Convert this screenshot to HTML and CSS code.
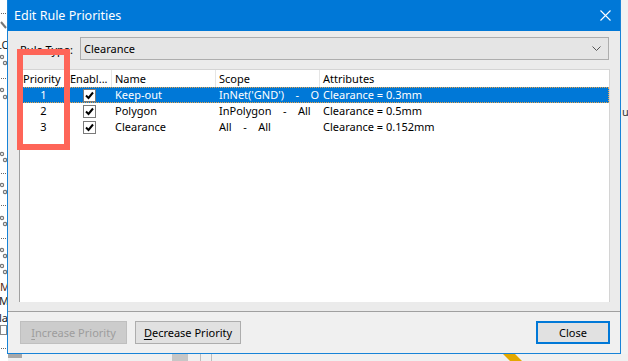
FILE: index.html
```
<!DOCTYPE html>
<html lang="en">
<head>
    <meta charset="UTF-8">
    <title>Edit Rule Priorities</title>
    <link rel="stylesheet" href="styles.css">
</head>
<body>
    <div class="screen">
        <div class="app-left">
            <svg width="7" height="354" viewBox="0 0 7 354">
                <g fill="#666">
                    <rect x="1" y="13" width="1" height="1"/><rect x="3" y="13" width="1" height="1"/><rect x="5" y="13" width="1" height="1"/>
                    <rect x="1" y="78" width="1" height="1"/><rect x="3" y="78" width="1" height="1"/><rect x="5" y="78" width="1" height="1"/>
                    <rect x="1" y="173" width="1" height="1"/><rect x="3" y="173" width="1" height="1"/><rect x="5" y="173" width="1" height="1"/>
                    <rect x="1" y="205" width="1" height="1"/><rect x="3" y="205" width="1" height="1"/><rect x="5" y="205" width="1" height="1"/>
                    <rect x="1" y="238" width="1" height="1"/><rect x="3" y="238" width="1" height="1"/><rect x="5" y="238" width="1" height="1"/>
                    <rect x="1" y="348" width="1" height="1"/><rect x="3" y="348" width="1" height="1"/><rect x="5" y="348" width="1" height="1"/>
                </g>
                <path d="M1 22 L6 28" stroke="#777" stroke-width="2"/>
                <g fill="none" stroke="#777" stroke-width="1.2">
                    <circle cx="2" cy="57" r="1.6"/><circle cx="5" cy="63" r="1.6"/>
                    <circle cx="2" cy="90" r="1.6"/><circle cx="5" cy="97" r="1.6"/>
                    <circle cx="2" cy="154" r="1.6"/><circle cx="5" cy="160" r="1.6"/>
                    <circle cx="2" cy="185" r="1.6"/><circle cx="5" cy="192" r="1.6"/>
                    <circle cx="2" cy="218" r="1.6"/><circle cx="5" cy="224" r="1.6"/>
                    <circle cx="2" cy="250" r="1.6"/><circle cx="5" cy="256" r="1.6"/>
                    <circle cx="2" cy="266" r="1.6"/><circle cx="5" cy="272" r="1.6"/>
                </g>
                <g font-family="Noto Sans, sans-serif" font-size="11" fill="#222">
                    <text x="-4" y="49">LO</text>
                    <text x="0" y="291" fill="#5a2a10">M</text>
                    <text x="-1" y="305">Ma</text>
                    <text x="-1" y="322">la</text>
                </g>
                <rect x="0.5" y="325.5" width="6" height="9" fill="none" stroke="#888"/>
            </svg>
        </div>

        <div class="dialog">
            <div class="titlebar">
                <span class="title">Edit Rule Priorities</span>
                <svg class="close-x" width="11" height="11" viewBox="0 0 11 11">
                    <path d="M0.5 0.5 L10.5 10.5 M10.5 0.5 L0.5 10.5" stroke="#fff" stroke-width="1.1"/>
                </svg>
            </div>

            <div class="content">
                <div class="rule-type">
                    <span class="rule-label">Rule Type:</span>
                    <div class="combo">
                        <span>Clearance</span>
                        <svg class="chevron" width="9" height="5" viewBox="0 0 9 5">
                            <path d="M0.5 0.5 L4.5 4.5 L8.5 0.5" fill="none" stroke="#555" stroke-width="1"/>
                        </svg>
                    </div>
                </div>

                <div class="list">
                    <div class="list-head">
                        <div class="cell">Priority</div>
                        <div class="cell">Enabl...</div>
                        <div class="cell">Name</div>
                        <div class="cell">Scope</div>
                        <div class="cell">Attributes</div>
                    </div>
                    <div class="list-row selected">
                        <div class="cell num">1</div>
                        <div class="cell check"><span class="checkbox"><svg width="11" height="11" viewBox="0 0 11 11"><path d="M2 5.5 L4.5 8 L9 2.5" fill="none" stroke="#000" stroke-width="2"/></svg></span></div>
                        <div class="cell">Keep-out</div>
                        <div class="cell"><span class="clip">InNet('GND')    -    O</span></div>
                        <div class="cell">Clearance = 0.3mm</div>
                    </div>
                    <div class="list-row">
                        <div class="cell num">2</div>
                        <div class="cell check"><span class="checkbox"><svg width="11" height="11" viewBox="0 0 11 11"><path d="M2 5.5 L4.5 8 L9 2.5" fill="none" stroke="#000" stroke-width="2"/></svg></span></div>
                        <div class="cell">Polygon</div>
                        <div class="cell">InPolygon    -    All</div>
                        <div class="cell">Clearance = 0.5mm</div>
                    </div>
                    <div class="list-row">
                        <div class="cell num">3</div>
                        <div class="cell check"><span class="checkbox"><svg width="11" height="11" viewBox="0 0 11 11"><path d="M2 5.5 L4.5 8 L9 2.5" fill="none" stroke="#000" stroke-width="2"/></svg></span></div>
                        <div class="cell">Clearance</div>
                        <div class="cell">All    -    All</div>
                        <div class="cell">Clearance = 0.152mm</div>
                    </div>
                </div>
            </div>

            <div class="footer">
                <button class="btn btn-increase" disabled><u>I</u>ncrease Priority</button>
                <button class="btn btn-decrease"><u>D</u>ecrease Priority</button>
                <button class="btn btn-close">Close</button>
            </div>
        </div>

        <div class="app-right">
            <span class="app-right-text">u</span>
        </div>
    </div>

    <div class="app-bottom">
        <svg width="628" height="7" viewBox="0 0 628 7">
            <rect x="0" y="0" width="628" height="7" fill="#f0f0f0"/>
            <rect x="0" y="0" width="8" height="7" fill="#fff"/>
            <rect x="8" y="0" width="14" height="4" fill="#a8a8a8"/>
            <rect x="172" y="0" width="16" height="7" fill="#c6c6c6"/>
            <rect x="200" y="0" width="1" height="7" fill="#bdbdbd"/>
            <rect x="211" y="0" width="1" height="7" fill="#bdbdbd"/>
            <path d="M503 0 L515 0 L522 7 L510 7 Z" fill="#e3a800"/>
        </svg>
    </div>

    <div class="highlight-box"></div>
</body>
</html>
```

FILE: styles.css
```
body {
    margin: 0;
    padding: 0;
    font-family: "Noto Sans", "Open Sans", sans-serif;
    font-size: 11px;
    color: #000;
    background: #fff;
    width: 628px;
    height: 361px;
    overflow: hidden;
    position: relative;
}
.screen {
    display: flex;
    height: 354px;
}
.app-left {
    width: 7px;
    background: #fff;
    overflow: hidden;
}
.app-left svg {
    display: block;
}
.app-right {
    width: 7px;
    background: #f2f2f2;
    overflow: hidden;
}
.app-right-text {
    display: block;
    margin-top: 104px;
    margin-left: 1px;
    color: #333;
}
.app-bottom {
    height: 7px;
}
.app-bottom svg {
    display: block;
}
.dialog {
    width: 614px;
    box-sizing: border-box;
    border: 1px solid #1883d7;
    border-top: none;
    display: flex;
    flex-direction: column;
    background: #f0f0f0;
}
.titlebar {
    height: 31px;
    background: #0078d7;
    display: flex;
    align-items: center;
    padding: 0 9px 0 6px;
    color: #fff;
}
.title {
    font-size: 12.5px;
    flex: 1;
    padding-bottom: 1px;
}
.close-x {
    display: block;
}
.content {
    height: 281px;
    box-sizing: border-box;
    padding: 6px 10px 9px 11px;
    background: #ebebeb;
    border-bottom: 1px solid #a0a0a0;
    display: flex;
    flex-direction: column;
    gap: 9px;
}
.rule-type {
    display: flex;
    align-items: center;
    height: 23px;
}
.rule-label {
    width: 60px;
    padding-left: 1px;
    padding-top: 1px;
}
.combo {
    flex: 1;
    height: 23px;
    box-sizing: border-box;
    border: 1px solid #adadad;
    background: #e5e5e5;
    display: flex;
    align-items: center;
    padding: 0 7px 0 3px;
    margin-right: 1px;
}
.combo span {
    flex: 1;
}
.chevron {
    display: block;
}
.list {
    flex: 1;
    background: #fff;
    border: 1px solid #d4d4d4;
    border-left-color: #a0a0a0;
    border-bottom: none;
}
.list-head,
.list-row {
    display: grid;
    grid-template-columns: 47px 45px 104px 104px 1fr;
}
.list-head {
    height: 17px;
}
.list-head .cell {
    border-right: 1px solid #e5e5e5;
    line-height: 17px;
}
.list-head .cell:last-child {
    border-right: none;
}
.cell {
    box-sizing: border-box;
    padding-left: 3px;
    white-space: pre;
    overflow: hidden;
    line-height: 16px;
}
.clip {
    display: block;
    overflow: hidden;
}
.list-row {
    height: 16px;
    box-sizing: border-box;
}
.list-row.selected {
    background: #0078d7;
    color: #fff;
    outline: 1px dotted #e9a44a;
    outline-offset: -1px;
}
.cell.num {
    text-align: center;
    padding-left: 0;
}
.cell.check {
    display: flex;
    align-items: center;
    justify-content: center;
    padding-left: 0;
}
.checkbox {
    width: 13px;
    height: 13px;
    box-sizing: border-box;
    border: 1px solid #7a7a7a;
    background: #fff;
    display: flex;
    align-items: center;
    justify-content: center;
}
.checkbox svg {
    display: block;
}
.footer {
    flex: 1;
    display: flex;
    align-items: flex-start;
    gap: 8px;
    padding: 9px 10px 0 12px;
    background: #f0f0f0;
}
.btn {
    height: 23px;
    box-sizing: border-box;
    font-family: "Noto Sans", "Open Sans", sans-serif;
    font-size: 11px;
    border: 1px solid #adadad;
    background: #e1e1e1;
    color: #000;
    padding: 0;
}
.btn u {
    text-decoration-thickness: 1px;
    text-underline-offset: 2px;
}
.btn-increase {
    width: 107px;
    background: #cccccc;
    border-color: #bfbfbf;
    color: #9d9d9d;
}
.btn-decrease {
    width: 106px;
}
.btn-close {
    width: 74px;
    margin-left: auto;
    border: 2px solid #0078d7;
}
.highlight-box {
    position: absolute;
    left: 17px;
    top: 49px;
    width: 53px;
    height: 101px;
    box-sizing: border-box;
    border: 6px solid #fe6558;
}
```
